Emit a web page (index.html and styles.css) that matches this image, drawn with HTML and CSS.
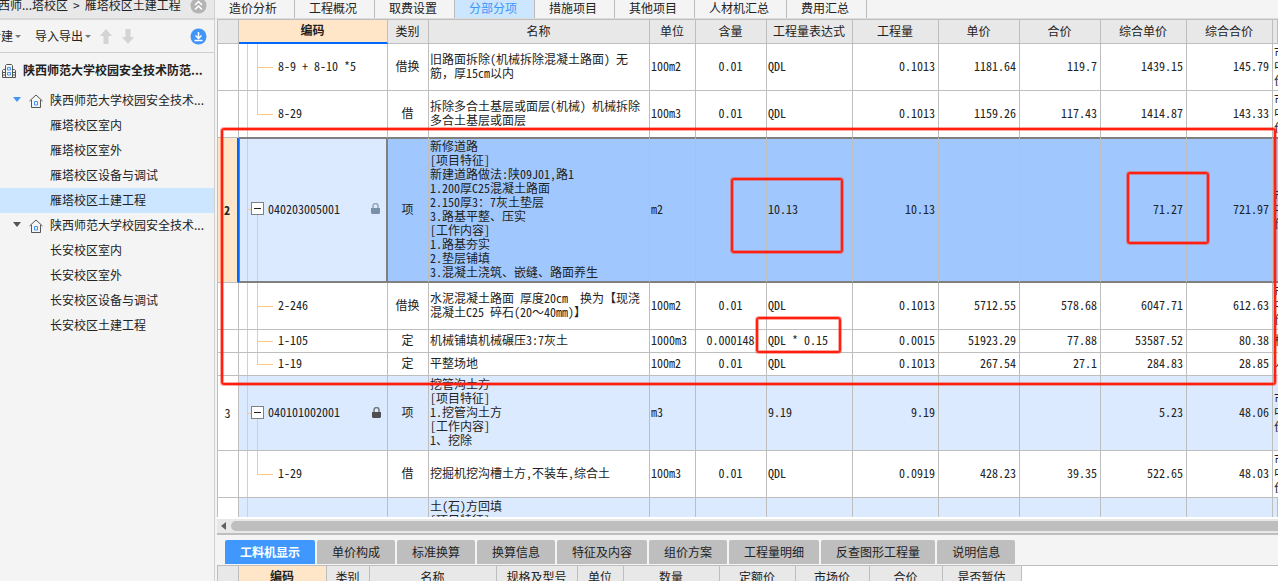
FILE: index.html
```html
<!DOCTYPE html>
<html lang="zh-CN">
<head>
<meta charset="utf-8">
<title>雁塔校区土建工程</title>
<link rel="stylesheet" href="styles.css">
</head>
<body>
<div class="app">
  <aside class="sidebar">
    <div class="crumbs">
      <span class="crumb-text">西师...塔校区<span class="crumb-sep">&gt;</span>雁塔校区土建工程</span>
      <button class="round" aria-label="收起"><svg width="17" height="17" viewBox="0 0 17 17"><circle cx="8.500" cy="8.500" r="8" fill="#b4b4b4"/><path d="M5 8l3.500-3.500L12 8M5 12.500L8.500 9l3.500 3.500" fill="none" stroke="#fff" stroke-width="1.500"/></svg></button>
    </div>
    <div class="toolbar">
      <button class="tool tool-new">新建<span class="caret"></span></button>
      <button class="tool">导入导出<span class="caret"></span></button>
      <button class="arrow" aria-label="上移"><svg width="12" height="15" viewBox="0 0 12 15"><path d="M6 0l6 7H8.500v8h-5V7H0z" fill="#d4d4d4"/></svg></button>
      <button class="arrow" aria-label="下移"><svg width="12" height="15" viewBox="0 0 12 15"><path d="M6 15l6-7H8.500V0h-5v8H0z" fill="#d4d4d4"/></svg></button>
      <button class="round" aria-label="下载"><svg width="17" height="17" viewBox="0 0 17 17"><circle cx="8.500" cy="8.500" r="8" fill="#4096f8"/><path d="M8.500 4v6.500M5.500 7.500l3 3 3-3M4.500 12.500h8" fill="none" stroke="#fff" stroke-width="1.500"/></svg></button>
    </div>
    <nav class="tree">
      <a class="root" href="#"><svg width="16" height="16" viewBox="0 0 16 16" fill="none"><path d="M4.500 14.500V2.500l1-1h5l1 1v12M4.500 6.500h-2l-1 1v7h13v-7l-1-1h-2M2 9.500h2M2 12h2M12 9.500h2M12 12h2" stroke="#555"/><path d="M6.500 4.500h3v2.500h-3zM6.500 9.500h3v2.500h-3z" stroke="#4096f8"/></svg>陕西师范大学校园安全技术防范...</a>
      <a class="group" href="#"><span class="twist blue"></span><svg width="14" height="14" viewBox="0 0 14 14" fill="none"><path d="M.5 7L7 1l6.500 6M2.500 6v7.500h9V6" stroke="#555"/><path d="M5.500 7.500h3v3.500h-3z" stroke="#4096f8"/></svg>陕西师范大学校园安全技术...</a>
      <a class="leaf" href="#">雁塔校区室内</a>
      <a class="leaf" href="#">雁塔校区室外</a>
      <a class="leaf" href="#">雁塔校区设备与调试</a>
      <a class="leaf current" href="#">雁塔校区土建工程</a>
      <a class="group" href="#"><span class="twist"></span><svg width="14" height="14" viewBox="0 0 14 14" fill="none"><path d="M.5 7L7 1l6.500 6M2.500 6v7.500h9V6" stroke="#555"/><path d="M5.500 7.500h3v3.500h-3z" stroke="#4096f8"/></svg>陕西师范大学校园安全技术...</a>
      <a class="leaf" href="#">长安校区室内</a>
      <a class="leaf" href="#">长安校区室外</a>
      <a class="leaf" href="#">长安校区设备与调试</a>
      <a class="leaf" href="#">长安校区土建工程</a>
    </nav>
  </aside>

  <main class="main">
    <div class="top-tabs">
      <button>造价分析</button><button>工程概况</button><button>取费设置</button><button class="on">分部分项</button><button>措施项目</button><button>其他项目</button><button>人材机汇总</button><button>费用汇总</button>
    </div>

    <div class="sheet">
      <table class="grid">
        <colgroup><col class="w-idx"><col class="w-code"><col class="w-type"><col class="w-name"><col class="w-unit"><col class="w-cont"><col class="w-qty"><col class="w-qty"><col class="w-price"><col class="w-price"><col class="w-qty"><col class="w-qty"><col></colgroup>
        <thead>
          <tr><th></th><th class="sorted">编码</th><th>类别</th><th>名称</th><th>单位</th><th>含量</th><th>工程量表达式</th><th>工程量</th><th>单价</th><th>合价</th><th>综合单价</th><th>综合合价</th><th></th></tr>
        </thead>
        <tbody>
          <tr class="tall"><td class="idx"></td><td class="code child">8-9 + 8-10 *5</td><td class="mid">借换</td><td>旧路面拆除(机械拆除混凝土路面) 无<br>筋，厚15cm以内</td><td>100m2</td><td class="mid">0.01</td><td>QDL</td><td class="num">0.1013</td><td class="num">1181.64</td><td class="num">119.7</td><td class="num">1439.15</td><td class="num">145.79</td><td class="cut">市<br>中<br>价</td></tr>
          <tr class="tall above"><td class="idx"></td><td class="code child end">8-29</td><td class="mid">借</td><td>拆除多合土基层或面层(机械) 机械拆除<br>多合土基层或面层</td><td>100m3</td><td class="mid">0.01</td><td>QDL</td><td class="num">0.1013</td><td class="num">1159.26</td><td class="num">117.43</td><td class="num">1414.87</td><td class="num">143.33</td><td class="cut">市<br>中<br>价</td></tr>
          <tr class="selected"><td class="idx">2</td><td class="code parent"><div class="item"><button class="fold" aria-label="折叠"></button>040203005001<svg class="lock" width="9" height="11" viewBox="0 0 9 11"><path d="M2 5V3a2.500 2.500 0 0 1 5 0v2" fill="none" stroke="#94a6b8" stroke-width="1.500"/><path d="M0 5h9v5l-1 1H1l-1-1z" fill="#7890a8"/></svg></div></td><td class="mid">项</td><td>新修道路<br>[项目特征]<br>新建道路做法:陕09J01,路1<br>1.200厚C25混凝土路面<br>2.150厚3：7灰土垫层<br>3.路基平整、压实<br>[工作内容]<br>1.路基夯实<br>2.垫层铺填<br>3.混凝土浇筑、嵌缝、路面养生</td><td>m2</td><td></td><td>10.13</td><td class="num">10.13</td><td></td><td></td><td class="num">71.27</td><td class="num">721.97</td><td class="cut">市<br>中<br>价</td></tr>
          <tr class="tall"><td class="idx"></td><td class="code child">2-246</td><td class="mid">借换</td><td>水泥混凝土路面 厚度20cm&nbsp; 换为【现浇<br>混凝土C25 碎石(20～40mm)】</td><td>100m2</td><td class="mid">0.01</td><td>QDL</td><td class="num">0.1013</td><td class="num">5712.55</td><td class="num">578.68</td><td class="num">6047.71</td><td class="num">612.63</td><td class="cut">市<br>中<br>价</td></tr>
          <tr class="short"><td class="idx"></td><td class="code child">1-105</td><td class="mid">定</td><td>机械铺填机械碾压3:7灰土</td><td>1000m3</td><td class="mid">0.000148</td><td>QDL * 0.15</td><td class="num">0.0015</td><td class="num">51923.29</td><td class="num">77.88</td><td class="num">53587.52</td><td class="num">80.38</td><td class="cut">机</td></tr>
          <tr class="short"><td class="idx"></td><td class="code child end">1-19</td><td class="mid">定</td><td>平整场地</td><td>100m2</td><td class="mid">0.01</td><td>QDL</td><td class="num">0.1013</td><td class="num">267.54</td><td class="num">27.1</td><td class="num">284.83</td><td class="num">28.85</td><td class="cut">人</td></tr>
          <tr class="section"><td class="idx">3</td><td class="code parent"><div class="item"><button class="fold" aria-label="折叠"></button>040101002001<svg class="lock" width="9" height="11" viewBox="0 0 9 11"><path d="M2 5V3a2.500 2.500 0 0 1 5 0v2" fill="none" stroke="#777" stroke-width="1.500"/><path d="M0 5h9v5l-1 1H1l-1-1z" fill="#505050"/></svg></div></td><td class="mid">项</td><td>挖管沟土方<br>[项目特征]<br>1.挖管沟土方<br>[工作内容]<br>1、挖除</td><td>m3</td><td></td><td>9.19</td><td class="num">9.19</td><td></td><td></td><td class="num">5.23</td><td class="num">48.06</td><td class="cut">市<br>中<br>价</td></tr>
          <tr class="tall"><td class="idx"></td><td class="code child end">1-29</td><td class="mid">借</td><td>挖掘机挖沟槽土方,不装车,综合土</td><td>100m3</td><td class="mid">0.01</td><td>QDL</td><td class="num">0.0919</td><td class="num">428.23</td><td class="num">39.35</td><td class="num">522.65</td><td class="num">48.03</td><td class="cut">市<br>中<br>价</td></tr>
          <tr class="section"><td class="idx"></td><td class="code trunk"></td><td></td><td>土(石)方回填<br>[项目特征]</td><td></td><td></td><td></td><td></td><td></td><td></td><td></td><td></td><td></td></tr>
        </tbody>
      </table>
      <div class="mark mark-block"></div>
      <div class="mark mark-quantity"></div>
      <div class="mark mark-price"></div>
      <div class="mark mark-formula"></div>
    </div>

    <div class="hscroll"><svg width="5" height="10" viewBox="0 0 5 10"><path d="M5 1v8L0 5z" fill="#606068"/></svg><div class="thumb"></div></div>

    <div class="detail-tabs">
      <button class="on">工料机显示</button><button>单价构成</button><button>标准换算</button><button>换算信息</button><button>特征及内容</button><button>组价方案</button><button>工程量明细</button><button>反查图形工程量</button><button>说明信息</button>
    </div>
    <div class="detail">
      <table class="grid detail-grid">
        <colgroup><col class="w-idx"><col class="d-code"><col class="d-type"><col class="d-name"><col class="d-spec"><col class="w-unit"><col class="d-num"><col class="d-fix"><col class="d-mkt"><col class="d-sum"><col class="d-est"></colgroup>
        <thead><tr><th></th><th class="sorted">编码</th><th>类别</th><th>名称</th><th>规格及型号</th><th>单位</th><th>数量</th><th>定额价</th><th>市场价</th><th>合价</th><th>是否暂估</th></tr></thead>
      </table>
    </div>
  </main>
</div>
</body>
</html>
```
FILE: styles.css
```css
* { box-sizing: border-box; }
body {
  margin: 0;
  background: #f4f4f4;
  color: #222;
  font: 12px/16px "Noto Sans CJK SC", sans-serif;
}
button {
  margin: 0;
  padding: 0;
  border: 0;
  background: none;
  color: inherit;
  font: inherit;
  white-space: nowrap;
}
a { color: inherit; text-decoration: none; }
svg { display: block; flex: none; }

.app { display: flex; height: 100vh; overflow: hidden; }

/* Project tree */
.sidebar {
  flex: none;
  width: 215px;
  border-right: 1px solid #d0d0d0;
  overflow: hidden;
}
.crumbs {
  display: flex;
  align-items: center;
  justify-content: space-between;
  height: 20px;
  padding: 0 7px 8px 0;
  border-bottom: 2px solid #d8d8d8;
  background: #e8e8e8;
  white-space: nowrap;
}
.crumb-text { margin-left: -2px; }
.crumb-sep { margin: 0 5px; }
.toolbar {
  display: flex;
  align-items: center;
  height: 33px;
  padding-right: 7px;
  border-bottom: 1px solid #d0d0d0;
}
.tool { display: flex; align-items: center; gap: 2px; margin-right: 9px; }
.tool-new { margin-left: -11px; margin-right: 14px; }
.caret {
  border: 3px solid transparent;
  border-top-color: #777;
  border-bottom: 0;
}
.arrow { margin-right: 10px; }
.toolbar .round { margin-left: auto; }
.tree { display: flex; flex-direction: column; white-space: nowrap; }
.tree a { display: flex; align-items: center; height: 25px; padding-bottom: 2px; }
.tree svg { margin-top: 2px; }
.tree .root { height: 35px; padding-left: 1px; gap: 6px; font-weight: 700; }
.tree .group { padding-left: 13px; gap: 7px; }
.tree .leaf { padding-left: 50px; }
.tree .current { background: #cce6ff; }
.twist {
  margin-right: 1px;
  border: 4px solid transparent;
  border-top: 5px solid #555;
  border-bottom: 0;
}
.twist.blue { border-top-color: #4096f8; }

/* Main tabs */
.main { display: flex; flex: 1; flex-direction: column; min-width: 0; }
.top-tabs {
  display: flex;
  flex: none;
  height: 19px;
  border-bottom: 1px solid #dcdcdc;
}
.top-tabs button {
  height: 18px;
  padding: 0 17px 7px 14px;
  border-right: 1px solid #bbb;
}
.top-tabs button.on { background: #cce6ff; color: #4096f8; }

/* Cost table */
.sheet {
  position: relative;
  flex: 1;
  min-height: 0;
  margin-left: 2px;
  overflow: hidden;
  border-bottom: 2px solid #fff;
  background: #fff;
}
.grid {
  width: 100%;
  border-collapse: separate;
  border-spacing: 0;
  border-top: 1px solid #bebebe;
  border-left: 1px solid #bebebe;
  table-layout: fixed;
  font: 12px/14px "Noto Sans Mono CJK SC", "Noto Sans CJK SC", monospace;
}
.w-idx { width: 21px; }
.w-code { width: 149px; }
.w-type { width: 41px; }
.w-name { width: 221px; }
.w-unit { width: 46px; }
.w-cont { width: 71px; }
.w-qty { width: 86px; }
.w-price { width: 81px; }
.grid th, .grid td {
  padding: 0 2px 2px 1px;
  border-right: 1px solid #bebebe;
  border-bottom: 1px solid #bebebe;
  overflow: hidden;
  text-align: left;
  white-space: nowrap;
}
.grid th {
  height: 24px;
  background: #e8e8e8;
  font-weight: 400;
  text-align: center;
}
.grid th.sorted {
  border-bottom: 2px solid #0068ff;
  background: #ffe6c8;
  font-weight: 700;
}
.grid .mid { text-align: center; }
.grid .num { padding-right: 3px; text-align: right; }
.grid .idx { padding: 0 1px 0 0; text-align: center; }
.grid .cut { border-right: 0; }
.tall { height: 47px; }
.short { height: 23px; }
.selected { height: 145px; }
.section { height: 75px; }
.grid .section td:not(.idx) { background-color: #dceaff; }
.grid .section:last-child td { vertical-align: top; padding-top: 1px; }

.grid .code { background-repeat: no-repeat; }
.grid .child {
  padding-left: 39px;
  background-image: linear-gradient(#ffc880, #ffc880), linear-gradient(#ffc880, #ffc880), linear-gradient(#ffc880, #ffc880);
  background-position: 8px 0, 18px 0, 18px 50%;
  background-size: 1px 100%, 1px 100%, 16px 1px;
}
.grid .child.end { background-size: 1px 100%, 1px 50%, 16px 1px; }
.grid .parent {
  padding: 0 6px 2px 12px;
  background-image: linear-gradient(#ffc880, #ffc880), linear-gradient(#ffc880, #ffc880), linear-gradient(#ffc880, #ffc880);
  background-position: 8px 0, 18px 100%, 8px 50%;
  background-size: 1px 100%, 1px 50%, 4px 1px;
}
.grid .trunk {
  background-image: linear-gradient(#ffc880, #ffc880);
  background-position: 8px 0;
  background-size: 1px 100%;
}
.item { display: flex; align-items: center; gap: 4px; }
.fold {
  display: grid;
  place-items: center;
  flex: none;
  width: 13px;
  height: 13px;
  border: 1px solid #808080;
  background: #fff;
}
.fold::before { content: ""; width: 7px; height: 1px; background: #222; }
.lock { margin-left: auto; }

.grid .above td:not(.idx) { border-bottom-color: #808080; }
.grid .selected td {
  border-bottom: 2px solid #808080;
  background-color: #a0c8ff;
  box-shadow: inset 0 1px #808080;
}
.grid .selected .idx {
  border-right: 2px solid #0068ff;
  border-bottom: 1px solid #bebebe;
  background: #ffe6c8;
  box-shadow: none;
  font-weight: 700;
}
.grid .selected .code {
  border-right: 2px solid #808080;
  background-color: #dceaff;
  box-shadow: inset 1px 1px #808080;
}

/* Review marks drawn over the table */
.mark {
  position: absolute;
  border: 2px solid #ff2010;
  border-radius: 3px;
  box-shadow: 0 0 0 1px rgba(255, 32, 16, 0.4), inset 0 0 0 1px rgba(255, 32, 16, 0.4);
  pointer-events: none;
}
.mark-block { left: 4px; top: 109px; width: 1055px; height: 257px; }
.mark-quantity { left: 514px; top: 159px; width: 112px; height: 75px; }
.mark-price { left: 910px; top: 153px; width: 82px; height: 72px; }
.mark-formula { left: 539px; top: 298px; width: 85px; height: 36px; }

/* Horizontal scrollbar */
.hscroll {
  display: flex;
  flex: none;
  align-items: center;
  gap: 5px;
  height: 16px;
  margin-left: 2px;
  padding-left: 4px;
  border-bottom: 2px solid #bebebe;
  background: #e8e8e8;
}
.thumb { flex: 1; height: 10px; border-radius: 5px 0 0 5px; background: #bebebe; }

/* Detail panel */
.detail-tabs {
  display: flex;
  flex: none;
  align-items: flex-end;
  gap: 2px;
  height: 30px;
  padding-left: 10px;
  padding-bottom: 1px;
}
.detail-tabs button {
  height: 24px;
  padding: 0 15px;
  border-radius: 2px 2px 0 0;
  background: #bebebe;
}
.detail-tabs .on { background: #4098ff; color: #fff; font-weight: 700; }
.detail {
  flex: none;
  height: 16px;
  margin-left: 2px;
  overflow: hidden;
  border-top: 1px solid #bebebe;
  background: #fff;
}
.detail-grid { width: 805px; border-top: 0; }
.d-code { width: 88px; }
.d-type { width: 43px; }
.d-name { width: 127px; }
.d-spec { width: 81px; }
.d-num { width: 96px; }
.d-fix { width: 76px; }
.d-mkt { width: 74px; }
.d-sum { width: 73px; }
.d-est { width: 79px; }
```
